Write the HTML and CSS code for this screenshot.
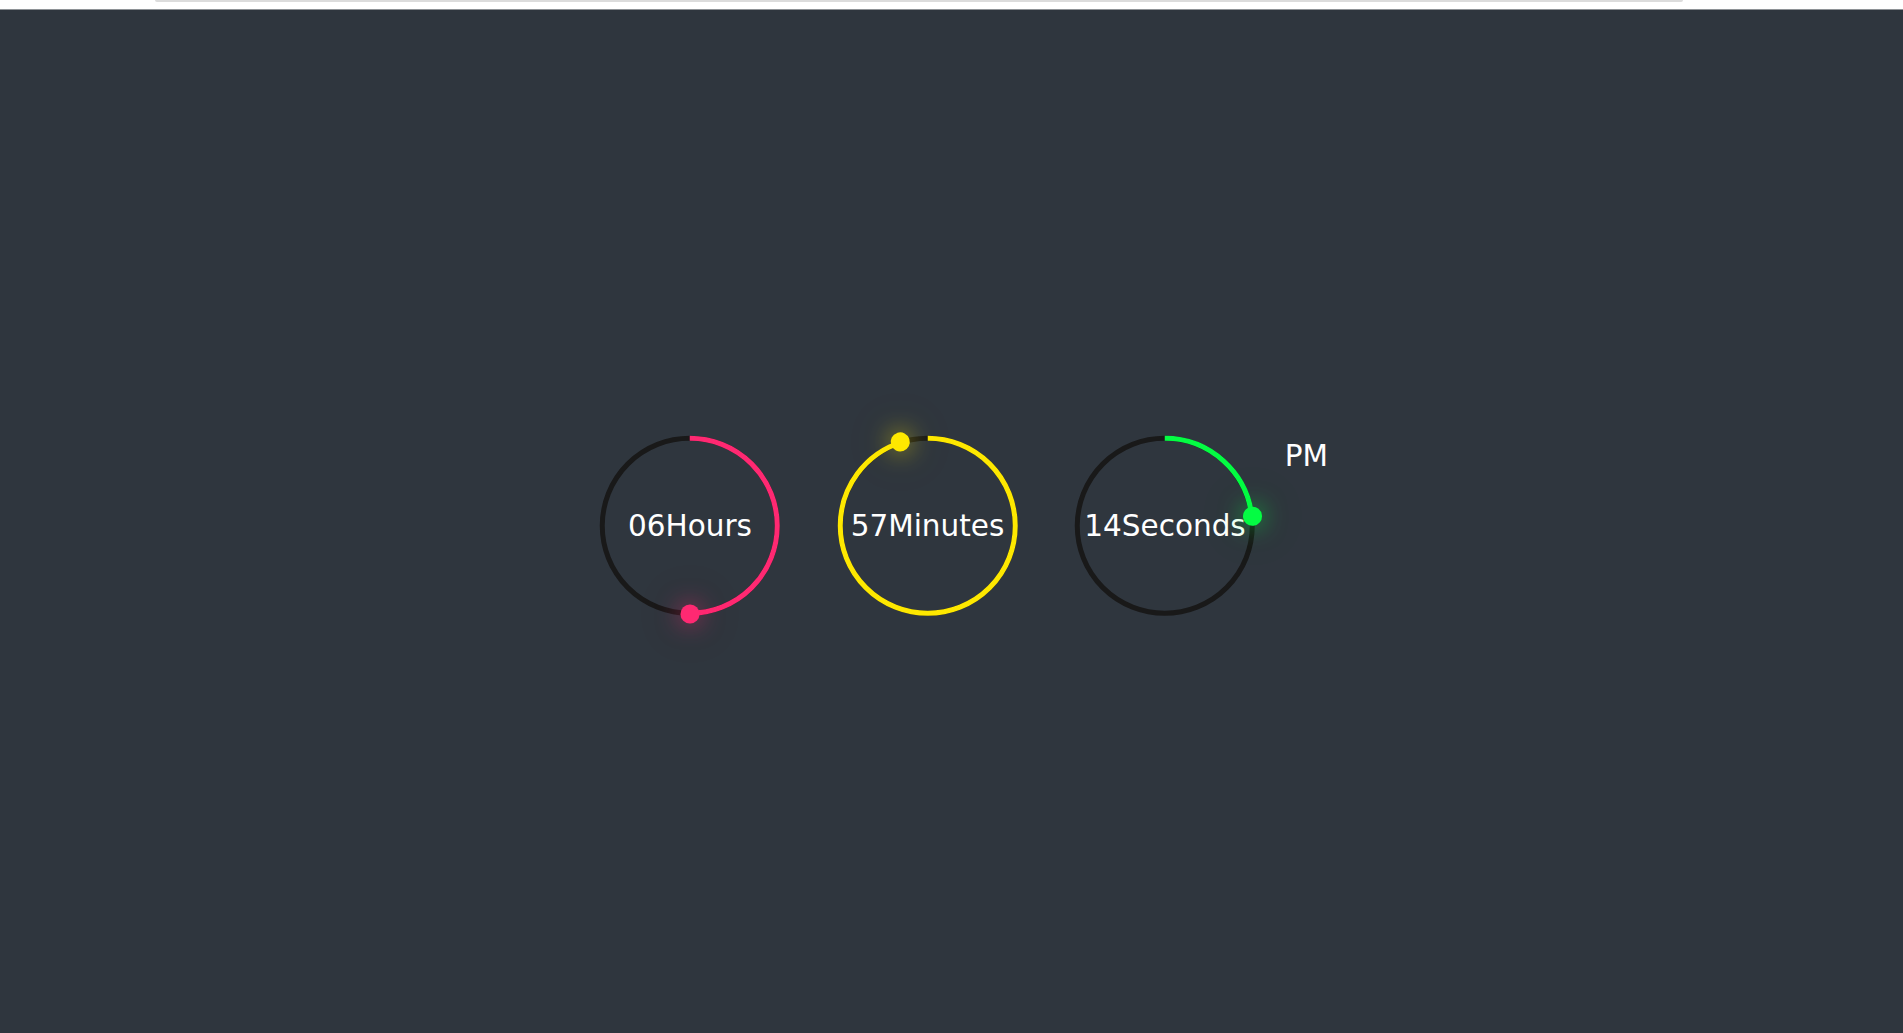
FILE: index.html
```
<!DOCTYPE html>
<html lang="en">
<head>
<meta charset="utf-8">
<title>Neon Clock</title>
<link rel="stylesheet" href="styles.css">
</head>
<body>
<div class="topstrip"><div class="topbar"></div></div>
<main class="stage">
  <div class="time">
    <div class="circle hours">
      <div class="dots" style="transform: rotate(180deg)"></div>
      <svg viewBox="0 0 150 150"><circle class="track" cx="75" cy="75" r="70"></circle><circle class="prog" cx="75" cy="75" r="70" style="stroke-dashoffset: 220"></circle></svg>
      <div class="label">06<span>Hours</span></div>
    </div>
    <div class="circle minutes">
      <div class="dots" style="transform: rotate(342deg)"></div>
      <svg viewBox="0 0 150 150"><circle class="track" cx="75" cy="75" r="70"></circle><circle class="prog" cx="75" cy="75" r="70" style="stroke-dashoffset: 22"></circle></svg>
      <div class="label">57<span>Minutes</span></div>
    </div>
    <div class="circle seconds">
      <div class="dots" style="transform: rotate(84deg)"></div>
      <svg viewBox="0 0 150 150"><circle class="track" cx="75" cy="75" r="70"></circle><circle class="prog" cx="75" cy="75" r="70" style="stroke-dashoffset: 337.33"></circle></svg>
      <div class="label">14<span>Seconds</span></div>
    </div>
    <div class="ap">PM</div>
  </div>
</main>
</body>
</html>
```
FILE: styles.css
```
* { box-sizing: border-box; margin: 0; padding: 0; }
html, body { width: 100%; height: 100%; }
body {
  background: #2f363e;
  font-family: "DejaVu Sans", "Open Sans", sans-serif;
  overflow: hidden;
}
.topstrip {
  height: 10px;
  background: #ffffff;
  border-bottom: 1px solid #8e9296;
}
.topbar {
  margin-left: 155px;
  width: 1528px;
  height: 2px;
  background: #dcdcdc;
  border-radius: 0 0 3px 3px;
}
.stage {
  height: 1023px;
  padding-top: 9px;
  display: flex;
  justify-content: center;
  align-items: center;
}
.time {
  display: flex;
  gap: 50px;
  color: #fff;
  align-items: flex-start;
}
.circle {
  position: relative;
  width: 187.5px;
  height: 187.5px;
  display: flex;
  justify-content: center;
  align-items: center;
}
.hours { --clr: #ff2972; }
.minutes { --clr: #fee800; }
.seconds { --clr: #04fc43; }
.circle svg {
  position: absolute;
  inset: 0;
  width: 187.5px;
  height: 187.5px;
  transform: rotate(270deg);
}
.circle svg circle {
  fill: transparent;
  stroke: #191919;
  stroke-width: 4;
}
.circle svg circle.prog {
  stroke: var(--clr);
  stroke-dasharray: 440;
}
.dots {
  position: absolute;
  inset: 0;
  display: flex;
  justify-content: center;
  z-index: 10;
}
.dots::before {
  content: "";
  position: absolute;
  top: -3.75px;
  width: 18.75px;
  height: 18.75px;
  border-radius: 50%;
  background: var(--clr);
  box-shadow: 0 0 25px color-mix(in srgb, var(--clr) 70%, transparent), 0 0 75px color-mix(in srgb, var(--clr) 22%, transparent);
}
.label {
  position: relative;
  z-index: 5;
  padding-top: 2px;
  font-size: 29.5px;
  font-weight: 400;
  line-height: 1.4;
  color: #fff;
  white-space: nowrap;
}
.ap {
  width: 0;
  margin-left: -2px;
  font-size: 29.5px;
  font-weight: 400;
  line-height: 1.4;
  margin-top: 4px;
  white-space: nowrap;
  transform: translateX(-22px);
}
```
